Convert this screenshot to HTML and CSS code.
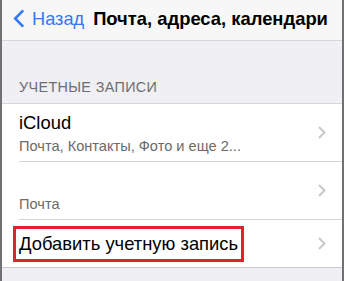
FILE: index.html
```html
<!DOCTYPE html>
<html lang="ru">
<head>
<meta charset="utf-8">
<link rel="stylesheet" href="styles.css">
</head>
<body>
<div class="device">
  <div class="nav">
    <div class="back">
      <svg class="back-icon" width="12" height="19" viewBox="0 0 12 19"><path d="M10.2 1.3 L2.2 9.5 L10.2 17.7" fill="none" stroke="#3478f6" stroke-width="2.6" stroke-linecap="butt" stroke-linejoin="miter"/></svg>
      <span class="back-text">Назад</span>
    </div>
    <div class="title">Почта, адреса, календари</div>
  </div>
  <div class="section-header">УЧЕТНЫЕ ЗАПИСИ</div>
  <div class="list">
    <div class="row row-two">
      <div class="row-body">
        <div class="row-title">iCloud</div>
        <div class="row-sub">Почта, Контакты, Фото и еще 2...</div>
      </div>
      <svg class="chev" width="8" height="13" viewBox="0 0 8 13"><path d="M1 1 L6.5 6.5 L1 12" fill="none" stroke="#c7c7cc" stroke-width="2"/></svg>
    </div>
    <div class="row row-two">
      <div class="row-body">
        <div class="row-title">&nbsp;</div>
        <div class="row-sub">Почта</div>
      </div>
      <svg class="chev" width="8" height="13" viewBox="0 0 8 13"><path d="M1 1 L6.5 6.5 L1 12" fill="none" stroke="#c7c7cc" stroke-width="2"/></svg>
    </div>
    <div class="row row-one">
      <div class="row-body">
        <span class="row-title marked">Добавить учетную запись</span>
      </div>
      <svg class="chev" width="8" height="13" viewBox="0 0 8 13"><path d="M1 1 L6.5 6.5 L1 12" fill="none" stroke="#c7c7cc" stroke-width="2"/></svg>
    </div>
  </div>
</div>
</body>
</html>
```

FILE: styles.css
```css
html, body {
  margin: 0;
  padding: 0;
  background: #ffffff;
}
body {
  width: 346px;
  height: 281px;
  overflow: hidden;
  font-family: "Liberation Sans", Arial, sans-serif;
}
.device {
  width: 340px;
  height: 281px;
  border-left: 2px solid #717171;
  border-right: 2px solid #717171;
  background: #efeff4;
  display: flex;
  flex-direction: column;
}
.nav {
  height: 40px;
  flex: none;
  background: #f7f7f8;
  border-bottom: 1px solid #d6d6da;
  display: flex;
  align-items: center;
  padding-left: 11px;
}
.back {
  display: flex;
  align-items: center;
  gap: 7px;
  color: #3478f6;
  font-size: 18.2px;
  margin-top: -3px;
}
.back-icon {
  display: block;
}
.back-text {
  line-height: 20px;
}
.title {
  margin-left: 9px;
  font-size: 18.4px;
  font-weight: bold;
  color: #000;
  line-height: 20px;
  margin-top: -3px;
  white-space: nowrap;
}
.section-header {
  padding: 38px 0 8px 17px;
  font-size: 14.4px;
  letter-spacing: 0.35px;
  line-height: 16px;
  color: #6d6d72;
  border-bottom: 1px solid #d6d6da;
}
.list {
  background: #ffffff;
  border-bottom: 1px solid #c8c7cc;
}
.row {
  display: flex;
  align-items: center;
  margin-left: 17px;
  padding-right: 16px;
  border-bottom: 1px solid #d4d4d8;
  box-sizing: border-box;
}
.row:last-child {
  border-bottom: none;
}
.row-two {
  height: 58px;
}
.row-two .row-body {
  align-self: flex-start;
  padding-top: 9px;
}
.row-one {
  height: 47px;
}
.row-body {
  flex: 1;
}
.row-title {
  font-size: 18.4px;
  line-height: 20px;
  color: #000;
}
.row-sub {
  margin-top: 5px;
  font-size: 14.6px;
  line-height: 17px;
  color: #6a6a6a;
}
.chev {
  display: block;
  flex: none;
}
.marked {
  position: relative;
  display: inline-block;
}
.marked::after {
  content: "";
  position: absolute;
  left: -6px;
  right: -6px;
  top: -8px;
  bottom: -8px;
  border: 3px solid #e5202e;
}
```
